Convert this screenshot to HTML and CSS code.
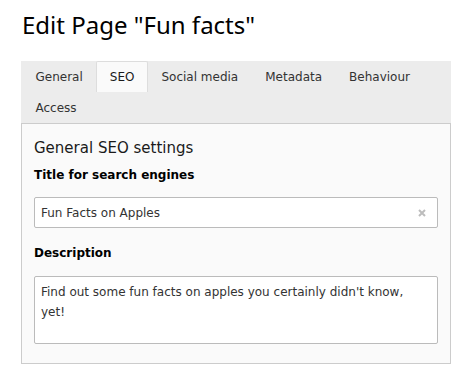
FILE: index.html
```html
<!DOCTYPE html>
<html>
<head>
<meta charset="utf-8">
<link rel="stylesheet" href="styles.css">
</head>
<body>
<h1 class="title">Edit Page "Fun facts"</h1>
<div class="editor">
  <ul class="tabs">
    <li class="tab">General</li>
    <li class="tab active">SEO</li>
    <li class="tab">Social media</li>
    <li class="tab">Metadata</li>
    <li class="tab">Behaviour</li>
    <li class="tab">Access</li>
  </ul>
  <div class="panel">
    <h2 class="section">General SEO settings</h2>
    <label class="label">Title for search engines</label>
    <div class="input">
      <span class="value">Fun Facts on Apples</span>
      <svg class="clear" width="8" height="8" viewBox="0 0 8 8"><path d="M1 1L7 7M7 1L1 7" stroke="#bdbdbd" stroke-width="2" fill="none"/></svg>
    </div>
    <label class="label label-desc">Description</label>
    <div class="textarea">Find out some fun facts on apples you certainly didn't know, yet!</div>
  </div>
</div>
</body>
</html>
```
FILE: styles.css
```css
html, body {
  margin: 0;
  padding: 0;
  background: #fff;
}
body {
  padding: 0 19px 0 21px;
  font-family: "DejaVu Sans", Verdana, sans-serif;
  color: #212121;
}
.title {
  margin: 0;
  padding: 10px 0 0 1px;
  height: 61px;
  box-sizing: border-box;
  font-family: "Noto Sans", sans-serif;
  font-weight: 400;
  font-size: 24px;
  line-height: 30px;
  color: #000;
}
.editor {
  width: 430px;
}
.tabs {
  list-style: none;
  margin: 0;
  padding: 0 0 0 1px;
  display: flex;
  flex-wrap: wrap;
  background: #ececec;
  border-bottom: 1px solid #cccccc;
}
.tab {
  height: 31px;
  box-sizing: border-box;
  padding: 0 12.5px;
  font-size: 12px;
  line-height: 31px;
  color: #333;
  border: 1px solid transparent;
  border-bottom: 0;
}
.tab.active {
  background: #fafafa;
  border-color: #dddddd;
  border-radius: 2px 2px 0 0;
  color: #1a1a1a;
}
.panel {
  background: #fafafa;
  border-left: 1px solid #cccccc;
  border-right: 1px solid #cccccc;
  padding: 14px 12px 19px 12px;
  border-bottom: 1px solid #cccccc;
}
.section {
  margin: 0;
  font-size: 15px;
  font-weight: 400;
  line-height: 20px;
  color: #1a1a1a;
}
.label {
  display: block;
  font-size: 12px;
  font-weight: 700;
  line-height: 16px;
  margin-top: 9px;
  color: #000;
}
.input {
  margin-top: 14px;
  height: 31px;
  box-sizing: border-box;
  background: #fff;
  border: 1px solid #bbbbbb;
  border-radius: 2px;
  display: flex;
  align-items: center;
  justify-content: space-between;
  padding: 0 11px 0 6px;
  font-size: 12px;
  color: #333;
}
.clear {
  display: block;
}
.label-desc {
  margin-top: 17px;
}
.textarea {
  margin-top: 15px;
  height: 68px;
  box-sizing: border-box;
  background: #fff;
  border: 1px solid #bbbbbb;
  border-radius: 2px;
  padding: 5px 6px;
  font-size: 12px;
  line-height: 20px;
  color: #333;
}
```
